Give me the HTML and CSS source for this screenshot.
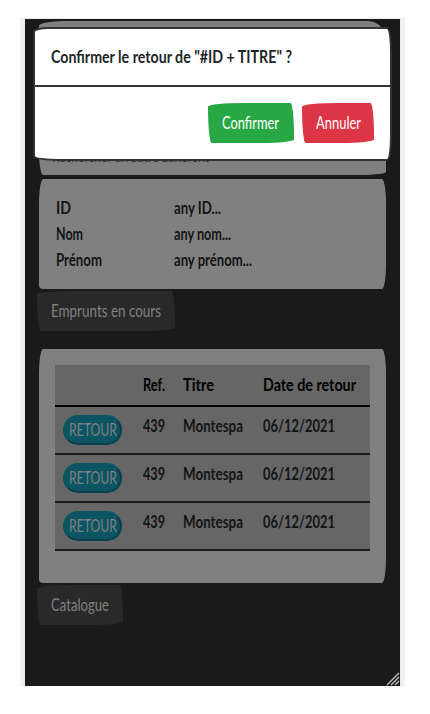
FILE: index.html
```
<!DOCTYPE html>
<html lang="fr">
<head>
<meta charset="utf-8">
<title>Retour</title>
<link rel="stylesheet" href="styles.css">
</head>
<body>
<main class="screen">
  <section class="card search"><span class="t" data-w="157">Rechercher un autre adhérent</span></section>
  <section class="card member">
    <div class="field"><b><span class="t" data-w="15">ID</span></b><b><span class="t" data-w="47">any ID...</span></b></div>
    <div class="field"><b><span class="t" data-w="27">Nom</span></b><b><span class="t" data-w="57">any nom...</span></b></div>
    <div class="field"><b><span class="t" data-w="46">Prénom</span></b><b><span class="t" data-w="78">any prénom...</span></b></div>
  </section>
  <button class="btn tab loans"><span class="t" data-w="110">Emprunts en cours</span></button>
  <section class="card list">
    <div class="row head"><span></span><span><span class="t" data-w="22">Ref.</span></span><span><span class="t" data-w="31">Titre</span></span><span><span class="t" data-w="93">Date de retour</span></span></div>
    <div class="row"><button class="pill"><span class="t" data-w="48">RETOUR</span></button><span><span class="t" data-w="22">439</span></span><span><span class="t" data-w="60">Montespa</span></span><span><span class="t" data-w="72">06/12/2021</span></span></div>
    <div class="row"><button class="pill"><span class="t" data-w="48">RETOUR</span></button><span><span class="t" data-w="22">439</span></span><span><span class="t" data-w="60">Montespa</span></span><span><span class="t" data-w="72">06/12/2021</span></span></div>
    <div class="row"><button class="pill"><span class="t" data-w="48">RETOUR</span></button><span><span class="t" data-w="22">439</span></span><span><span class="t" data-w="60">Montespa</span></span><span><span class="t" data-w="72">06/12/2021</span></span></div>
  </section>
  <button class="btn tab catalogue"><span class="t" data-w="58">Catalogue</span></button>
  <div class="modal">
    <header><span class="t" data-w="241">Confirmer le retour de "#ID + TITRE" ?</span></header>
    <footer>
      <button class="btn ok"><span class="t" data-w="57">Confirmer</span></button>
      <button class="btn cancel"><span class="t" data-w="45">Annuler</span></button>
    </footer>
  </div>
  <svg class="grip" width="14" height="14" viewBox="0 0 14 14"><path d="M1 13L13 1M5 13L13 5M9 13L13 9" stroke="#c4c4c4" stroke-width="1.3" fill="none"/></svg>
</main>
<script src="fit.js"></script>
</body>
</html>
```
FILE: styles.css
```
* { box-sizing: border-box; }
body {
  margin: 0;
  padding: 19px 0 0 25px;
  background: #fff;
  font: 16.5px/26px Lato, "Liberation Sans", sans-serif;
  color: #121416;
}
.screen {
  position: relative;
  display: flex;
  flex-direction: column;
  align-items: flex-start;
  width: 375px;
  height: 667px;
  padding: 2px 14px 0;
  background: #1a1a1a;
  box-shadow: 0 0 0 1px #ececec, 0 4px 3px rgba(0,0,0,.14), 0 4px 1px 5px #f3f3f3;
}
.t {
  display: inline-block;
  white-space: nowrap;
  transform-origin: 0 50%;
}
.card {
  width: 347px;
  background: #808080;
  border-radius: 4px / 25px 25px 25px 4px;
}
.search {
  height: 154px;
  padding: 123px 13px 0;
  font-size: 15px;
  line-height: 24px;
  color: #2b303a;
  border-radius: 25px 18px 25px 4px / 5px 20px 3px 25px;
}
.member {
  height: 110px;
  margin-top: 4px;
  padding: 16px 17px;
}
.field {
  display: grid;
  grid-template-columns: 118px 1fr;
  height: 26px;
}
.btn {
  height: 40px;
  padding: 0 14px;
  border: 0;
  font: 16.5px/40px Lato, "Liberation Sans", sans-serif;
  text-align: left;
  color: #fff;
  border-radius: 255px 25px 225px 25px / 25px 225px 25px 255px;
}
.tab {
  margin: 2px 0 0 -2px;
  background: #292929;
  color: #808080;
}
.loans { width: 138px; }
.catalogue { width: 86px; }
.list {
  height: 234px;
  margin-top: 18px;
  padding: 16px;
}
.row {
  display: grid;
  grid-template-columns: 80px 40px 80px 1fr;
  height: 48px;
  padding: 6px 0 0 8px;
  background: #666;
  border-bottom: 2px solid #1a1a1a;
  font-weight: 700;
}
.head {
  height: 42px;
  padding-top: 7px;
  border-color: #000;
  color: #000;
}
.pill {
  width: 59px;
  height: 30px;
  margin-top: 2px;
  padding: 0 0 0 4px;
  border: 2px solid;
  border-color: #0b5563 #083f4a #083f4a #0b5563;
  border-radius: 15px;
  background: #0b5563;
  color: #808080;
  font: 16.5px/26px Lato, "Liberation Sans", sans-serif;
  text-align: left;
}
.modal {
  position: absolute;
  left: 8px;
  top: 8px;
  width: 359px;
  height: 134px;
  background: #fff;
  border: 2px solid #333;
  border-radius: 15px 5px 5px 25px / 5px 25px 25px 5px;
  color: #212529;
}
.modal header {
  height: 58px;
  padding: 15px 16px;
  border-bottom: 2px solid #333;
  font-weight: 700;
}
.modal footer {
  display: flex;
  justify-content: flex-end;
  gap: 8px;
  padding: 16px;
}
.ok { width: 86px; background: #28a745; }
.cancel { width: 72px; background: #dc3545; }
.grip {
  position: absolute;
  right: 0;
  bottom: 0;
}
```
FILE: fit.js
```
// Condense each label horizontally to its designed width.
document.querySelectorAll('.t').forEach(function (el) {
  var natural = el.getBoundingClientRect().width;
  var target = Number(el.dataset.w);
  el.style.transform = 'scaleX(' + target / natural + ')';
  el.style.marginRight = target - natural + 'px';
});
```
